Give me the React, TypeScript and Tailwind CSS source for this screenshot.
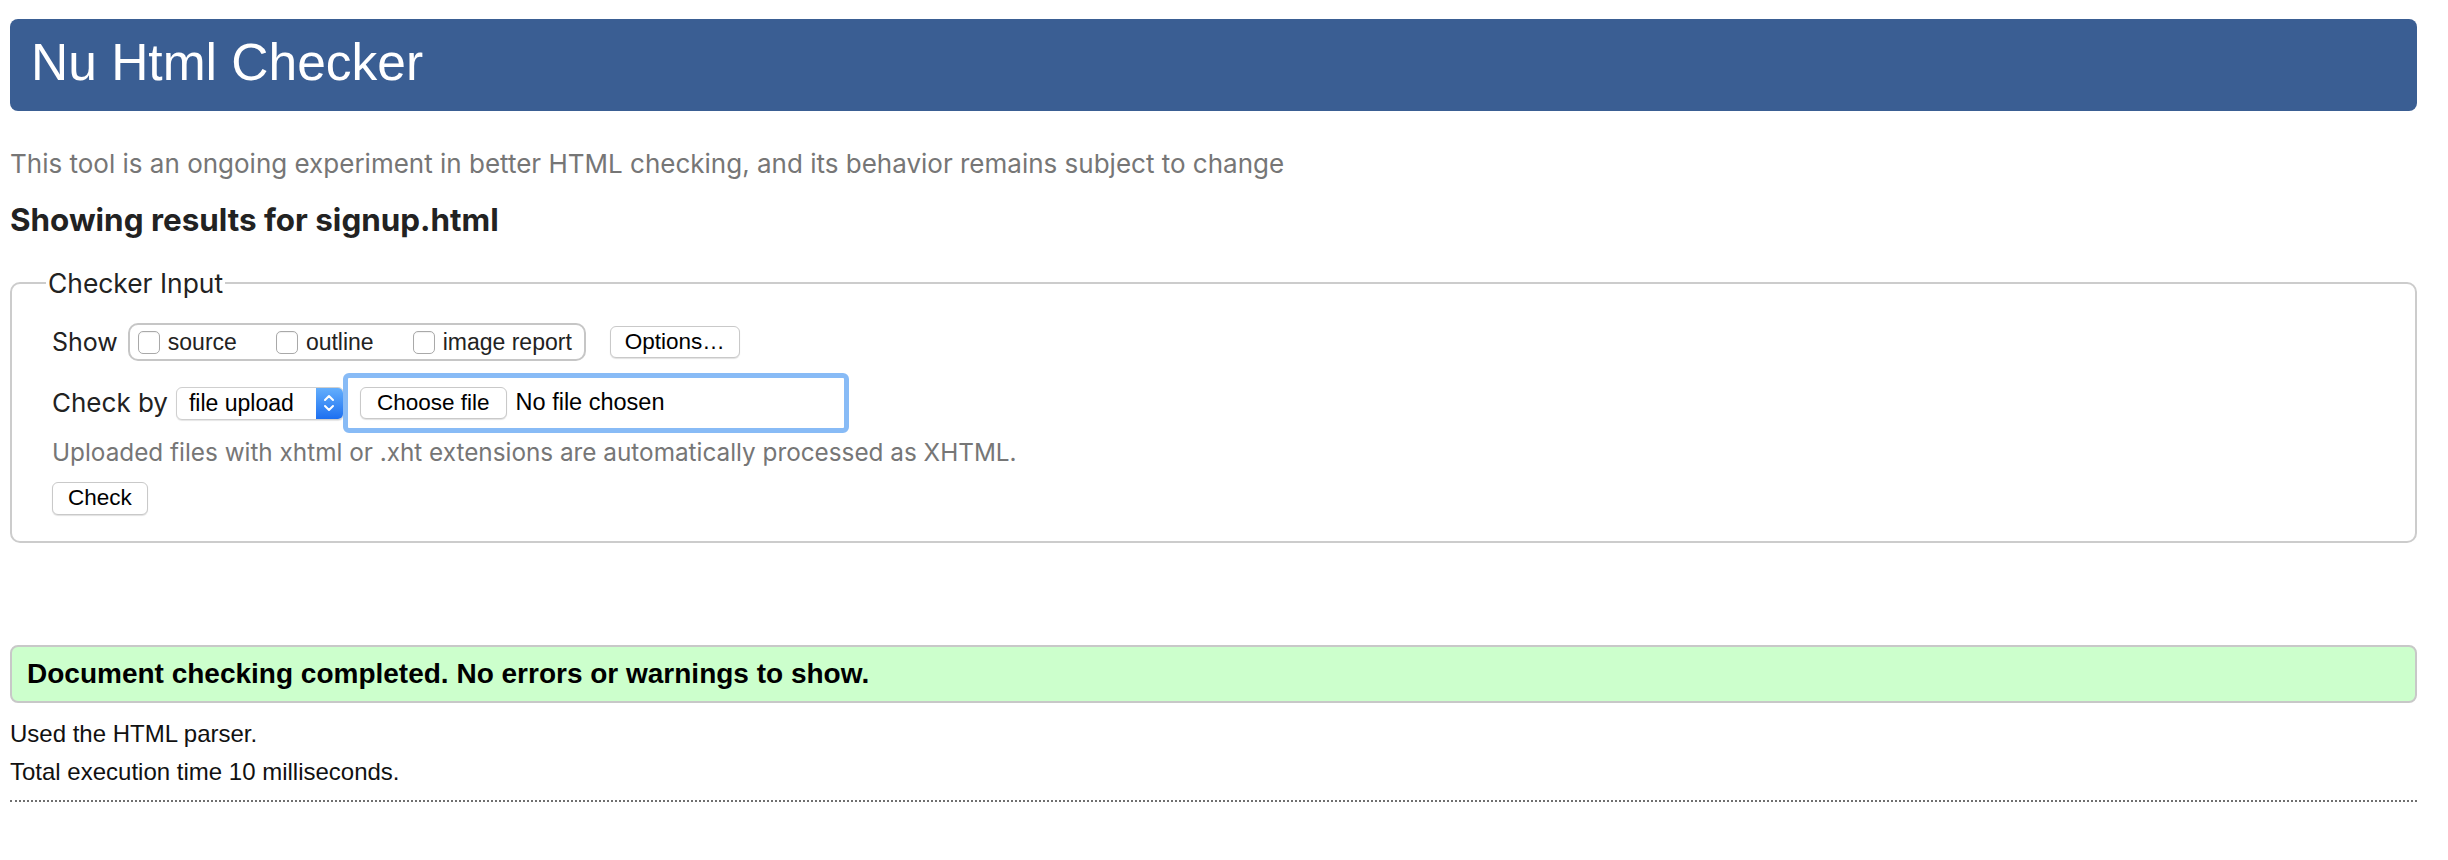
import React from "react";

const sans = "font-['Liberation_Sans',Arial,sans-serif]";
const ui = "font-['Inter','Liberation_Sans',sans-serif]";

const Checkbox = ({ label }: { label: string }) => (
  <label className="flex items-center gap-[8px]">
    <span className="h-[23px] w-[22px] rounded-[5px] border-[1.5px] border-[#a9a9a9] bg-white shadow-[inset_0_1px_1px_rgba(0,0,0,0.06)]" />
    <span className={`${sans} text-[23px] leading-none text-[#222]`}>{label}</span>
  </label>
);

const Button = ({ children, className = "" }: { children: React.ReactNode; className?: string }) => (
  <button
    className={`${sans} flex items-center rounded-[6px] border-[1.5px] border-[#c9c9c9] bg-white text-[22.5px] leading-none text-black shadow-[0_1px_1px_rgba(0,0,0,0.12)] ${className}`}
  >
    {children}
  </button>
);

export default function App() {
  return (
    <div className="min-h-screen bg-white pb-[40px] pl-[10px] pr-[31px] pt-[19px]">
      <header className="flex h-[92px] items-center rounded-[8px] bg-[#3a5e93] pl-[21px]">
        <h1 className={`${sans} pb-[4px] text-[51.5px] leading-none text-white`}>Nu Html Checker</h1>
      </header>

      <p className={`${ui} mt-[33px] text-[26px] leading-[40px] text-[#767676]`}>
        This tool is an ongoing experiment in better HTML checking, and its behavior remains subject to change
      </p>
      <h2 className={`${ui} mt-[16px] text-[31.4px] font-bold leading-[40px] text-[#222]`}>
        Showing results for signup.html
      </h2>

      <fieldset className="mt-[28px] rounded-[10px] border-2 border-[#cccccc] pb-[26px] pl-[40px]">
        <legend className={`${ui} ml-[-6px] px-[2px] text-[26.4px] leading-[30px] text-[#222]`}>Checker Input</legend>

        <div className="mt-[25px] flex h-[38px] items-center">
          <span className={`${ui} text-[25px] leading-none text-[#222]`}>Show</span>
          <div className="ml-[10px] flex h-[38px] items-center gap-[39px] rounded-[10px] border-2 border-[#c6c6c6] pl-[8px] pr-[12px]">
            <Checkbox label="source" />
            <Checkbox label="outline" />
            <Checkbox label="image report" />
          </div>
          <Button className="ml-[24px] h-[32px] px-[14px]">Options…</Button>
        </div>

        <div className="mt-[12px] flex h-[60px] items-center">
          <span className={`${ui} text-[26px] leading-none text-[#222]`}>Check by</span>
          <div className="ml-[8px] flex h-[33px] w-[168px] items-stretch rounded-[6px] border-[1.5px] border-[#cfcfcf] bg-white shadow-[0_1px_1px_rgba(0,0,0,0.1)]">
            <span className={`${sans} flex flex-1 items-center pl-[12px] text-[23px] leading-none text-black`}>file upload</span>
            <span className="flex w-[27px] items-center justify-center rounded-r-[5px] bg-gradient-to-b from-[#63aefc] to-[#1c6ff0]">
              <svg width="12" height="22" viewBox="0 0 12 22" fill="none" stroke="white" strokeWidth="2" strokeLinecap="round" strokeLinejoin="round">
                <path d="M2 8 L6 4 L10 8" />
                <path d="M2 14 L6 18 L10 14" />
              </svg>
            </span>
          </div>
          <div className="ml-[-1px] flex h-[60px] w-[506px] items-center rounded-[6px] border-[5px] border-[#88bbf6] bg-white pl-[12px]">
            <Button className="h-[32px] px-[16px]">Choose file</Button>
            <span className={`${sans} ml-[9px] text-[23.5px] leading-none text-black`}>No file chosen</span>
          </div>
        </div>

        <p className={`${ui} mt-[5px] text-[24.3px] leading-[28px] text-[#767676]`}>
          Uploaded files with xhtml or .xht extensions are automatically processed as XHTML.
        </p>

        <div className="mt-[16px] flex">
          <Button className="h-[33px] px-[15px]">Check</Button>
        </div>
      </fieldset>

      <div className="mt-[102px] flex h-[58px] items-center rounded-[8px] border-2 border-[#c8c8c8] bg-[#ccffcc] pl-[15px]">
        <p className={`${sans} text-[28px] font-bold leading-none text-black`}>
          Document checking completed. No errors or warnings to show.
        </p>
      </div>

      <p className={`${sans} mt-[12px] text-[24px] leading-[38px] text-[#111]`}>Used the HTML parser.</p>
      <p className={`${sans} text-[24px] leading-[38px] text-[#111]`}>Total execution time 10 milliseconds.</p>

      <div className="mt-[9px] border-t-2 border-dotted border-[#6f6f6f]" />
    </div>
  );
}
